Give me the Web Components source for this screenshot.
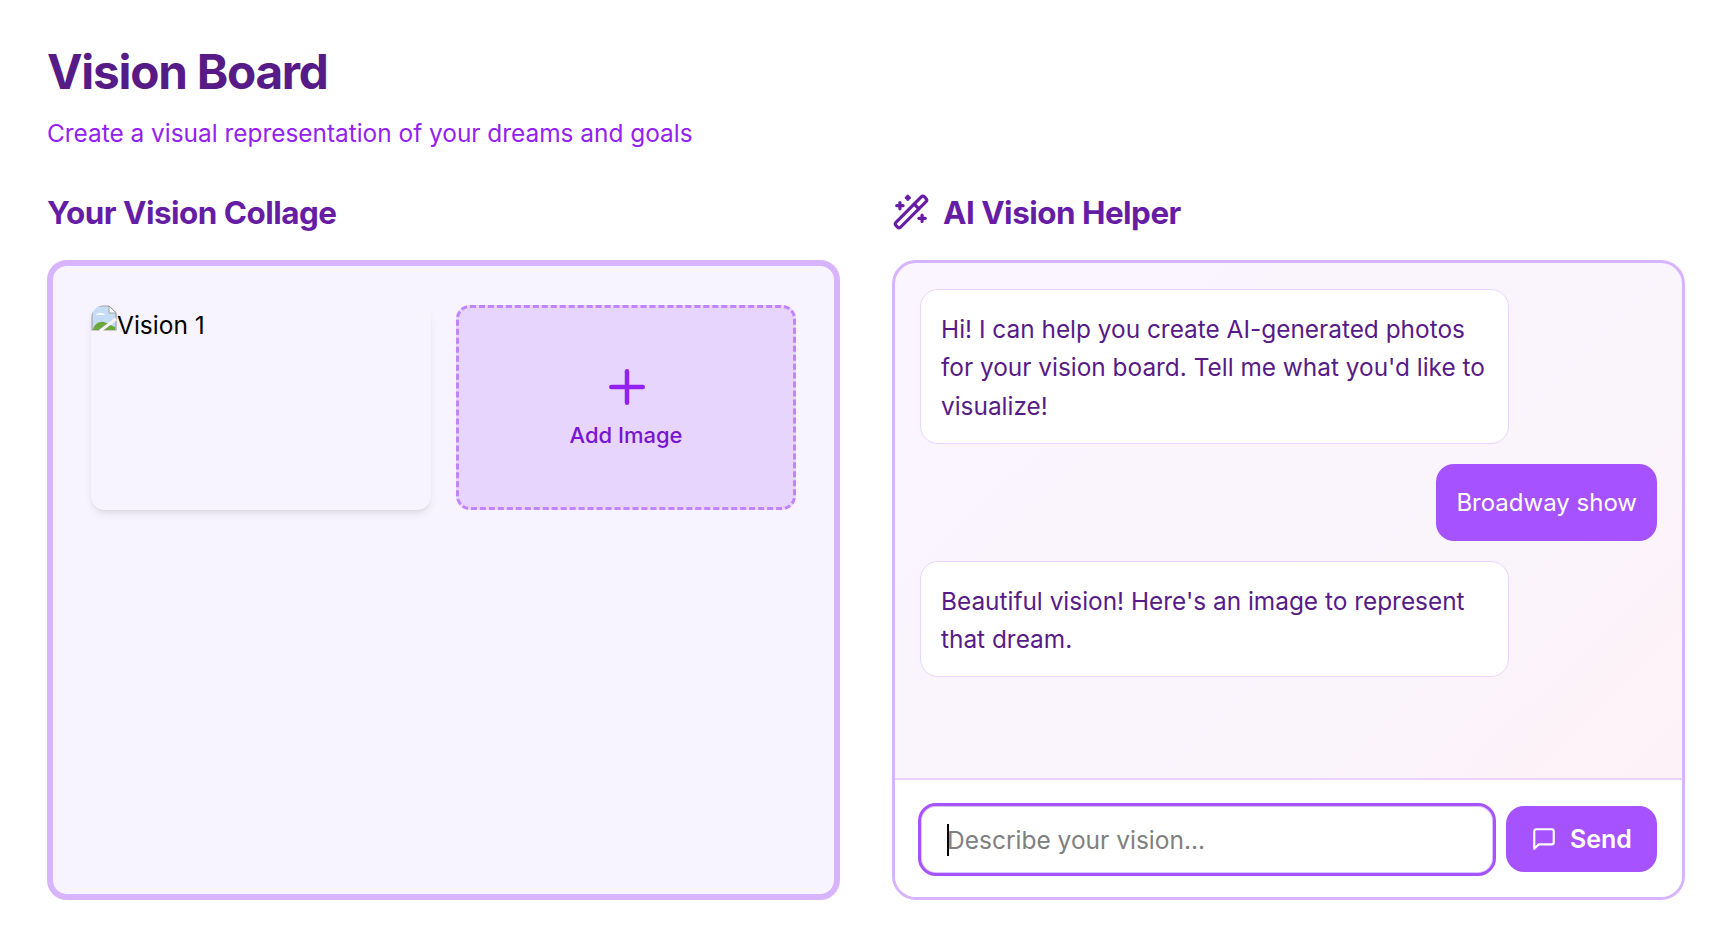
<!DOCTYPE html>
<html lang="en">
<head>
<meta charset="utf-8">
<title>Vision Board</title>
<style>
  html, body { margin: 0; background: #fff; }
  body { font-family: Inter, "Liberation Sans", sans-serif; }
</style>
</head>
<body>
<vision-board>
  <section-title slot="left">Your Vision Collage</section-title>
  <section-title slot="right" icon="wand">AI Vision Helper</section-title>
  <vision-collage slot="left">
    <vision-card alt="Vision 1"></vision-card>
    <add-tile>Add Image</add-tile>
  </vision-collage>
  <vision-chat slot="right">
    <chat-bubble>Hi! I can help you create AI-generated photos for your vision board. Tell me what you'd like to visualize!</chat-bubble>
    <chat-bubble from="user">Broadway show</chat-bubble>
    <chat-bubble>Beautiful vision! Here's an image to represent that dream.</chat-bubble>
  </vision-chat>
</vision-board>

<script>
// Page shell: header plus the two columns
class VisionBoard extends HTMLElement {
  constructor() {
    super();
    this.attachShadow({ mode: "open" });
    this.shadowRoot.innerHTML = `
      <style>
        :host { display: block; height: 946px; box-sizing: border-box; padding: 46px 39px 0 47px; }
        h1 { margin: 0; font-size: 47.7px; line-height: 52px; font-weight: 700; letter-spacing: -1.25px; color: #571b87; }
        p { margin: 19px 0 0; font-size: 24.4px; line-height: 32px; color: #9322f0; }
        .cols { display: grid; grid-template-columns: 793px 793px; column-gap: 52px; margin-top: 43px; }
        .col { display: flex; flex-direction: column; gap: 28px; }
      </style>
      <h1>Vision Board</h1>
      <p>Create a visual representation of your dreams and goals</p>
      <div class="cols">
        <div class="col"><slot name="left"></slot></div>
        <div class="col"><slot name="right"></slot></div>
      </div>
    `;
  }
}

class SectionTitle extends HTMLElement {
  constructor() {
    super();
    this.attachShadow({ mode: "open" });
  }

  connectedCallback() {
    const wand = this.getAttribute("icon") === "wand" ? `
      <svg width="38" height="38" viewBox="0 0 24 24" fill="none" stroke="currentColor" stroke-width="2" stroke-linecap="round" stroke-linejoin="round">
        <path d="m21.64 3.64-1.28-1.28a1.21 1.21 0 0 0-1.72 0L2.36 18.64a1.21 1.21 0 0 0 0 1.72l1.28 1.28a1.2 1.2 0 0 0 1.72 0L21.64 5.36a1.2 1.2 0 0 0 0-1.72"/>
        <path d="m14 7 3 3"/><path d="M5 6v4"/><path d="M19 14v4"/><path d="M10 2v2"/><path d="M7 8H3"/><path d="M21 16h-4"/><path d="M11 3H9"/>
      </svg>` : "";
    this.shadowRoot.innerHTML = `
      <style>
        :host { display: flex; align-items: center; gap: 13px; box-sizing: border-box; height: 40px; padding-top: 1px; font-size: 31.4px; font-weight: 700; letter-spacing: -0.5px; color: #661da4; }
        svg { flex: none; margin-top: -1px; }
      </style>
      ${wand}<slot></slot>
    `;
  }
}

class VisionCollage extends HTMLElement {
  constructor() {
    super();
    this.attachShadow({ mode: "open" });
    this.shadowRoot.innerHTML = `
      <style>
        :host {
          display: grid; grid-template-columns: 340px 340px; grid-auto-rows: 205px; gap: 25px;
          align-content: start; box-sizing: border-box; height: 640px; padding: 39px 38px;
          background: #f8f4ff; border: 6px solid #d8b4fe; border-radius: 20px;
        }
      </style>
      <slot></slot>
    `;
  }
}

// The picture in the reference failed to load, so this shows the broken image mark and its alt text
class VisionCard extends HTMLElement {
  constructor() {
    super();
    this.attachShadow({ mode: "open" });
  }

  connectedCallback() {
    const alt = this.getAttribute("alt") || "";
    this.shadowRoot.innerHTML = `
      <style>
        :host {
          display: block; border-radius: 14px; background: #f8f4ff; overflow: hidden;
          box-shadow: 0 5px 10px -2px rgba(0,0,0,.1), 0 2px 4px -2px rgba(0,0,0,.08);
          font-size: 24.5px; line-height: 29px; color: #000;
        }
        .alt { display: flex; align-items: flex-start; }
        svg { flex: none; }
        span { margin-top: 6px; }
      </style>
      <div class="alt">
        <svg width="26" height="26" viewBox="0 0 26 26">
          <path d="M1 25V3a2 2 0 0 1 2-2h15l7 7v17z" fill="#c5dcf5" stroke="#a0a0a0" stroke-width="1.2"/>
          <path d="M18 1v7h7z" fill="#fff" stroke="#a0a0a0"/>
          <path d="M5 10c2-3 7-3 9 0z" fill="#fff"/>
          <path d="M2 25c1-6 6-9 11-8l11 5v3z" fill="#6aa83e"/>
          <path d="M9 26 25 14" stroke="#f8f4ff" stroke-width="3"/>
        </svg>
        <span>${alt}</span>
      </div>
    `;
  }
}

class AddTile extends HTMLElement {
  constructor() {
    super();
    this.attachShadow({ mode: "open" });
    this.shadowRoot.innerHTML = `
      <style>
        :host {
          display: flex; flex-direction: column; align-items: center; justify-content: center; gap: 8px;
          box-sizing: border-box; padding-bottom: 7px; background: #e7d5fd; border: 3px dashed #c084fc; border-radius: 14px;
          font-size: 22px; font-weight: 500; color: #7814d2;
        }
        svg { color: #9322f0; margin-left: 1px; }
      </style>
      <svg width="54" height="54" viewBox="0 0 24 24" fill="none" stroke="currentColor" stroke-width="2" stroke-linecap="round" stroke-linejoin="round">
        <path d="M5 12h14"/><path d="M12 5v14"/>
      </svg>
      <span><slot></slot></span>
    `;
  }
}

class ChatBubble extends HTMLElement {
  constructor() {
    super();
    this.attachShadow({ mode: "open" });
  }

  connectedCallback() {
    this.shadowRoot.innerHTML = `
      <style>
        :host { display: block; box-sizing: border-box; max-width: 589px; padding: 20px 20px 18px; border-radius: 18px; font-size: 24.4px; line-height: 38.4px; background: #fff; border: 1px solid #e9d5ff; color: #571b87; }
        :host([from="user"]) { align-self: flex-end; background: #a652ff; border: 0; padding: 20px 20px 18px; font-size: 24px; color: #fff; }
      </style>
      <slot></slot>
    `;
  }
}

class ChatComposer extends HTMLElement {
  constructor() {
    super();
    this.attachShadow({ mode: "open" });
    this.shadowRoot.innerHTML = `
      <style>
        :host { display: flex; align-items: center; gap: 10px; box-sizing: border-box; height: 119px; padding: 1px 25px 0 23px; background: #fff; border-top: 2px solid #e9d5ff; }
        .field { position: relative; flex: 1; display: flex; }
        input {
          flex: 1; min-width: 0; box-sizing: border-box; height: 73px; padding: 1px 26px 0; outline: 0;
          border: 3px solid #a652ff; border-radius: 18px; background: #fff; box-shadow: inset 0 0 0 1px #dcc4ff;
          font: 400 24.5px Inter, "Liberation Sans", sans-serif; color: #571b87;
        }
        input::placeholder { color: #808080; opacity: 1; }
        .caret { position: absolute; left: 29px; top: 21px; width: 2px; height: 32px; background: #000; }
        button {
          flex: none; display: flex; align-items: center; justify-content: center; gap: 13px;
          width: 151px; height: 66px; margin-bottom: 1px; padding: 1px 0 0; border: 0; border-radius: 18px; background: #a652ff;
          font: 600 25px Inter, "Liberation Sans", sans-serif; color: #fff;
        }
      </style>
      <div class="field">
        <input type="text" placeholder="Describe your vision...">
        <span class="caret"></span>
      </div>
      <button type="button">
        <svg width="26" height="26" viewBox="0 0 24 24" fill="none" stroke="currentColor" stroke-width="2" stroke-linecap="round" stroke-linejoin="round">
          <path d="M21 15a2 2 0 0 1-2 2H7l-4 4V5a2 2 0 0 1 2-2h14a2 2 0 0 1 2 2z"/>
        </svg>
        Send
      </button>
    `;
  }
}

class VisionChat extends HTMLElement {
  constructor() {
    super();
    this.attachShadow({ mode: "open" });
    this.shadowRoot.innerHTML = `
      <style>
        :host {
          display: flex; flex-direction: column; box-sizing: border-box; height: 640px; overflow: hidden;
          border: 3px solid #d8b4fe; border-radius: 24px;
          background: linear-gradient(135deg, #faf5ff, #faf4fb 65%, #fdf2f7 88%);
        }
        .log { flex: 1; display: flex; flex-direction: column; gap: 20px; padding: 26px 25px; }
      </style>
      <div class="log"><slot></slot></div>
      <chat-composer></chat-composer>
    `;
  }
}

customElements.define("vision-board", VisionBoard);
customElements.define("section-title", SectionTitle);
customElements.define("vision-collage", VisionCollage);
customElements.define("vision-card", VisionCard);
customElements.define("add-tile", AddTile);
customElements.define("chat-bubble", ChatBubble);
customElements.define("chat-composer", ChatComposer);
customElements.define("vision-chat", VisionChat);
</script>
</body>
</html>
